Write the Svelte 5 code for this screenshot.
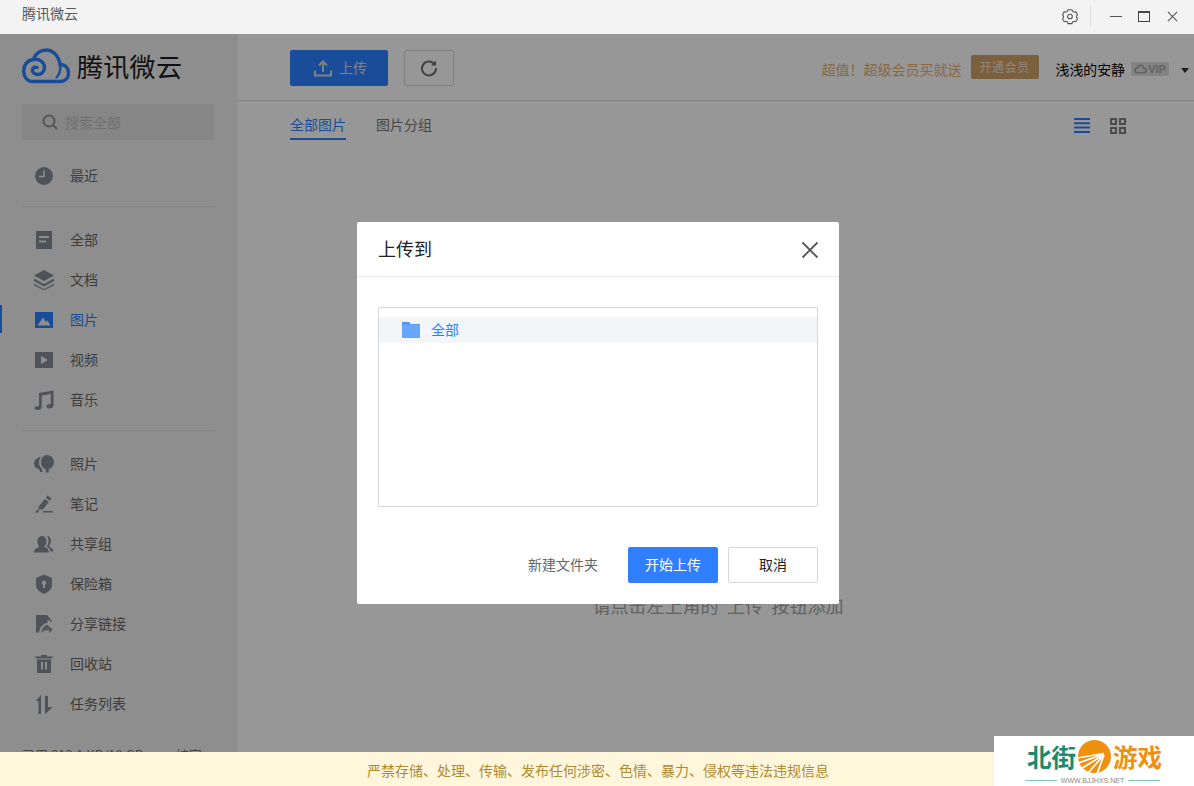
<script>
    const group1 = [{ icon: "doc", label: "全部" }, { icon: "layers", label: "文档" }, { icon: "image", label: "图片", active: true }, { icon: "video", label: "视频" }, { icon: "music", label: "音乐" }];
    const group2 = [{ icon: "balloon", label: "照片" }, { icon: "pen", label: "笔记" }, { icon: "users", label: "共享组" }, { icon: "shield", label: "保险箱" }, { icon: "share", label: "分享链接" }, { icon: "trash", label: "回收站" }, { icon: "sort", label: "任务列表" }];

    const icons = {
        clock: `<circle cx="10" cy="10" r="9"/><path d="M10 4.500v6H5" fill="none" stroke="#eee" stroke-width="1.600"/>`,
        doc: `<path fill-rule="evenodd" d="M2 1h16v18H2zM5 6v2h10V6zM5 10.500v2h7v-2z"/>`,
        layers: `<path d="M10 0 20 5.500 10 11 0 5.500z"/><path d="M0 8.500 10 14 20 8.500V11L10 16.500 0 11z"/><path d="M0 13.500 10 19 20 13.500V15.500L10 20.500 0 15.500z" opacity=".85"/>`,
        image: `<path fill="currentColor" fill-rule="evenodd" d="M1 2h18v16H1zM3.500 15.500h13L13.500 10.500 12 12 9 7.500z"/>`,
        video: `<path fill-rule="evenodd" d="M1 2h18v16H1zM7 6v8l7-4z"/>`,
        music: `<path d="M5 3 19.500 0.500V15.500C19.500 17.500 17.500 18.500 15.500 18.500S12.500 17.500 12.500 16.200 14 14 16.800 14V4L7.700 5.500V17.500C7.700 19 6 20 3.500 20S0.500 19.200 0.500 18 2 16 5 16z"/>`,
        balloon: `<path d="M13 1C17 1 20 4 20 8 20 11.500 17.500 14.500 14.500 15.500L15 18.500H11.500L12 15.500C9 14.500 7 11.500 7 8 7 4 9.500 1 13 1z"/><path d="M5.500 3C3 4 0 6.500 0 9.500 0 12.500 3 15 5.500 15.500L6 18H8.500L8 15C6 13 5 11 5 8.500 5 6.500 5.500 4.500 6.800 3z"/>`,
        pen: `<path d="M13.500 1.500 17.500 4.500 15.800 6.800 11.800 3.800z"/><path d="M10.800 5 14.800 8 9 15.500H4.500L4.800 12.500z"/><path d="M8 18.500H19V17H9.500zM1 18.500 3.500 15.500H5L4.500 18.500z"/>`,
        users: `<path d="M8 2C11 2 12.500 4.500 12.500 7.500 12.500 9.500 11.500 11 10.500 12V13C13 14 15 15.500 15 18.500H0C0 15.500 2.500 14 5 13V12C4 11 3.500 9.500 3.500 7.500 3.500 4.500 5 2 8 2z"/><path d="M13 2C15.500 2 17 4 17 7 17 9 16 10.500 15 11.500V12.500C17 13.500 19 14.500 19.500 17L17 18C16.500 15 14.500 13.500 12.500 12.500 13.500 11 14.500 9.500 14.500 7 14.500 5 14 3.500 13 2z"/>`,
        shield: `<path fill-rule="evenodd" d="M10 0.500 18 4V11C18 15 14 18.500 10 20 6 18.500 2 15 2 11V4zM10 6.500A2.300 2.300 0 0 0 9 10.800V14H11V10.800A2.300 2.300 0 0 0 10 6.500z"/>`,
        share: `<path d="M2 1H13L18 7V8.500L13.500 5.500V9C9 9.500 6 12.500 5 18.500H2z"/><path d="M13.500 8V11L19 15.500 15 19V16.500C12 16 9.500 16.500 7 19 8 14 10 11.500 13.500 10.500z" opacity=".9"/>`,
        trash: `<path d="M7 1H13V2.500H18.500V4.500H1.500V2.500H7z"/><path fill-rule="evenodd" d="M3 5.500H17V19H3zM7 8V15.500H9V8zM11 8V15.500H13V8z"/>`,
        sort: `<path d="M7 1V18H5V7H1.500zM11 2H14V13H18.500L12 19.500H11z"/><path d="M5 5 7 3V20H4.500V6z"/>`
    };
</script>

<div class="window">
    <header class="titlebar">
        <span class="app-name">腾讯微云</span>
        <div class="win-controls">
            <svg class="gear" width="16" height="17" viewBox="0 0 18 18" fill="none" stroke="#555" stroke-width="1.200">
                <path d="M6.800 1.500h4.400l.7 1.800 1.800.8 1.800-.5 2 3.400-1.200 1.500 0 1-.0 .5 1.200 1.500-2 3.400-1.800-.5-1.800.8-.7 1.800H6.800l-.7-1.800-1.800-.8-1.800.5-2-3.400 1.200-1.500v-1.500L.5 7l2-3.400 1.800.5 1.800-.8z"/>
                <circle cx="9" cy="9" r="2.600"/>
            </svg>
            <i class="win-sep"></i>
            <i class="win-min"></i>
            <i class="win-max"></i>
            <svg width="11" height="11" viewBox="0 0 12 12" stroke="#555" stroke-width="1.200"><path d="M1 1l10 10M11 1L1 11"/></svg>
        </div>
    </header>

    <div class="app">
        <aside class="sidebar">
            <div class="logo">
                <svg width="48" height="36" viewBox="0 0 48 36" fill="none" stroke="#2b80ff" stroke-width="3.400" stroke-linecap="round">
                    <path d="M10 33.500H38C44 33.500 46.500 29 46.500 25 46.500 20 43 16 38 16.500 37 8 31 2 24.500 2 18 2 13 6 11.500 11.500 5.500 12 1.700 17 1.700 23 1.700 29 5.500 33.500 10 33.500z"/>
                    <path d="M11.500 11.500C17 10.500 22.500 14 22.500 19.500 22.500 24 19 26.500 15.500 26.500 12 26.500 10 24 10.500 21.500 11 19.500 13 18.500 15 19.500"/>
                    <path d="M38 16.500C39 22 37 27 34.500 29.500" stroke-width="2.400"/>
                </svg>
                <span class="logo-text">腾讯微云</span>
            </div>
            <div class="search">
                <svg width="16" height="16" viewBox="0 0 16 16" fill="none" stroke="#8f8f8f" stroke-width="2"><circle cx="7" cy="7" r="5.500"/><path d="M11 11l4 4"/></svg>
                <span>搜索全部</span>
            </div>
            <nav class="nav">
                <div class="nav-item">
                    <svg class="nav-icon" width="20" height="20" viewBox="0 0 20 20">{@html icons.clock}</svg>
                    <span>最近</span>
                </div>
                <div class="divider"></div>
                {#each group1 as item}
                    <div class="nav-item" class:active={item.active}>
                        <svg class="nav-icon" width="20" height="20" viewBox="0 0 20 20">{@html icons[item.icon]}</svg>
                        <span>{item.label}</span>
                    </div>
                {/each}
                <div class="divider"></div>
                {#each group2 as item}
                    <div class="nav-item">
                        <svg class="nav-icon" width="20" height="20" viewBox="0 0 20 20">{@html icons[item.icon]}</svg>
                        <span>{item.label}</span>
                    </div>
                {/each}
            </nav>
            <div class="usage">
                <span>已用 313.1 KB/10 GB</span>
                <span>扩容 &gt;</span>
            </div>
        </aside>

        <main class="main">
            <div class="toolbar">
                <button class="upload">
                    <svg width="18" height="18" viewBox="0 0 18 18" fill="none" stroke="#d8d8d8" stroke-width="2"><path d="M9 13V3M5 6.500L9 2.500 13 6.500" /><path d="M1 11.500V16.500H17V11.500"/></svg>
                    <span>上传</span>
                </button>
                <button class="refresh">
                    <svg width="18" height="18" viewBox="0 0 18 18" fill="none" stroke="#6d6d6d" stroke-width="2"><path d="M14.800 5.500A7 7 0 1 0 16 9"/><path d="M16 1.500V6.500H11" fill="#6d6d6d" stroke="none"/></svg>
                </button>
                <div class="account">
                    <span class="promo">超值！超级会员买就送</span>
                    <span class="open-vip">开通会员</span>
                    <span class="username">浅浅的安静</span>
                    <span class="vip">
                        <svg width="13" height="10" viewBox="0 0 14 10" fill="none" stroke="#a4a4a4" stroke-width="1.800"><path d="M3.500 9H10.500C12 9 13 8 13 6.500 13 5 12 4.200 10.800 4.200 10.300 2 9 1 7.200 1 5.500 1 4 2 3.600 3.800 2 4 1 5 1 6.500 1 8 2 9 3.500 9z"/></svg>
                        VIP
                    </span>
                    <i class="caret"></i>
                </div>
            </div>
            <div class="tabs">
                <span class="tab selected">全部图片</span>
                <span class="tab">图片分组</span>
                <div class="views">
                    <svg width="16" height="15" viewBox="0 0 16 15" fill="#2b80ff"><path d="M0 0h16v2H0zM0 4.300h16v2H0zM0 8.600h16v2H0zM0 13h16v2H0z"/></svg>
                    <svg width="16" height="16" viewBox="0 0 16 16" fill="none" stroke="#7d7d7d" stroke-width="2"><path d="M1 1h5v5H1zM10 1h5v5h-5zM1 10h5v5H1zM10 10h5v5h-5z"/></svg>
                </div>
            </div>
            <p class="empty">请点击左上角的"上传"按钮添加</p>
        </main>

        <div class="overlay">
            <section class="modal">
                <div class="modal-head">
                    <h2>上传到</h2>
                    <svg class="modal-close" width="18" height="18" viewBox="0 0 18 18" stroke="#555" stroke-width="1.800"><path d="M1.500 1.500l15 15M16.500 1.500l-15 15"/></svg>
                </div>
                <div class="modal-body">
                    <div class="tree">
                        <div class="tree-row">
                            <svg width="18" height="16" viewBox="0 0 18 16"><path fill="#4f94f0" d="M0 0h7l2 2h9v3H0z"/><path fill="#66a6ff" d="M0 2.500h18V16H0z"/></svg>
                            <span>全部</span>
                        </div>
                    </div>
                </div>
                <div class="modal-foot">
                    <span class="new-folder">新建文件夹</span>
                    <button class="primary">开始上传</button>
                    <button class="cancel">取消</button>
                </div>
            </section>
        </div>

        <div class="banner">严禁存储、处理、传输、发布任何涉密、色情、暴力、侵权等违法违规信息</div>

        <div class="watermark">
            <div class="mark-row">
                <span class="green">北街</span>
                <svg width="35" height="34" viewBox="0 0 35 34">
                    <circle cx="17.500" cy="16.500" r="16.500" fill="#f0900f"/>
                    <path d="M27 13.500 0 18M27 14 0 23.500M27 14.500 3 29.500M27 15 10 34M27 15 20 34" stroke="#fff" stroke-width="1.700"/>
                </svg>
                <span class="orange">游戏</span>
            </div>
            <div class="mark-url"><i></i><span>WWW.BJJHXS.NET</span><i></i></div>
        </div>
    </div>
</div>

<style>
    :global(body) {
        margin: 0;
        font-family: "Noto Sans CJK SC", "Liberation Sans", sans-serif;
    }
    .window {
        width: 1194px;
        height: 786px;
        display: flex;
        flex-direction: column;
        overflow: hidden;
        font-size: 14px;
    }
    i {
        display: block;
    }
    .titlebar {
        height: 34px;
        flex: none;
        background: #f3f3f3;
        display: flex;
        align-items: center;
        justify-content: space-between;
        padding: 0 16px 6px 22px;
        box-sizing: border-box;
    }
    .app-name {
        color: #555;
        margin-bottom: 2px;
    }
    .win-controls {
        display: flex;
        align-items: center;
        padding-top: 4px;
    }
    .win-sep {
        width: 1px;
        height: 20px;
        background: #dcdcdc;
        margin: 0 19px 0 12px;
    }
    .win-min {
        width: 12px;
        height: 1px;
        background: #555;
        margin-right: 16px;
    }
    .win-max {
        width: 10px;
        height: 8px;
        border: 1px solid #444;
        border-top-width: 2px;
        margin-right: 17px;
    }
    .app {
        flex: 1;
        display: flex;
        position: relative;
        min-height: 0;
    }
    .sidebar {
        width: 238px;
        flex: none;
        background: #ededed;
        display: flex;
        flex-direction: column;
    }
    .logo {
        display: flex;
        align-items: center;
        gap: 7px;
        padding: 14px 0 0 22px;
    }
    .logo-text {
        font-size: 26px;
        line-height: 36px;
        letter-spacing: 0.3px;
        color: #1c1c1c;
    }
    .search {
        margin: 20px 24px 0 22px;
        height: 36px;
        background: #dfdfdf;
        border-radius: 2px;
        display: flex;
        align-items: center;
        gap: 7px;
        padding-left: 20px;
        color: #bcbcbc;
    }
    .nav {
        margin-top: 16px;
    }
    .nav-item {
        height: 40px;
        display: flex;
        align-items: center;
        gap: 16px;
        padding-left: 34px;
        color: #666;
        position: relative;
    }
    .nav-item span {
        margin-bottom: 2px;
    }
    .nav-item.active {
        color: #2b80ff;
    }
    .nav-item.active::before {
        content: "";
        position: absolute;
        left: 0;
        top: 5px;
        width: 2px;
        height: 28px;
        background: #2b80ff;
    }
    .nav-icon {
        fill: #808a93;
        color: #808a93;
        flex: none;
    }
    .active .nav-icon {
        color: #2b80ff;
    }
    .divider {
        height: 1px;
        background: #dedede;
        margin: 10px 24px 13px 22px;
    }
    .usage {
        margin-top: 21px;
        display: flex;
        justify-content: space-between;
        padding: 0 26px 0 22px;
        font-size: 13px;
        line-height: 20px;
        color: #777;
    }
    .main {
        flex: 1;
        background: #fcfcfc;
        display: flex;
        flex-direction: column;
        min-width: 0;
    }
    .toolbar {
        height: 67px;
        flex: none;
        box-sizing: border-box;
        border-bottom: 1px solid #d8d8d8;
        display: flex;
        align-items: center;
        padding: 2px 5px 0 52px;
    }
    button {
        font: inherit;
        box-sizing: border-box;
        padding: 0;
    }
    .upload {
        width: 98px;
        height: 36px;
        border: 0;
        border-radius: 2px;
        background: #2b80ff;
        color: #d8d8d8;
        display: flex;
        align-items: center;
        justify-content: center;
        gap: 7px;
        padding-left: 3px;
    }
    .upload span {
        margin-bottom: 2px;
    }
    .refresh {
        width: 50px;
        height: 36px;
        margin-left: 16px;
        background: transparent;
        border: 1px solid #d4d4d4;
        border-radius: 2px;
        display: flex;
        align-items: center;
        justify-content: center;
    }
    .account {
        margin-left: auto;
        display: flex;
        align-items: center;
        padding-top: 2px;
    }
    .promo {
        color: #e3ad75;
    }
    .open-vip {
        margin: 0 0 4px 9px;
        width: 68px;
        height: 24px;
        border-radius: 2px;
        background: #cf9e66;
        color: #f0e0c8;
        font-size: 12px;
        letter-spacing: 0.5px;
        line-height: 24px;
        text-align: center;
    }
    .username {
        margin-left: 17px;
        font-size: 13.900px;
        color: #000;
    }
    .vip {
        margin-left: 6px;
        width: 38px;
        height: 14px;
        background: #dcdcdc;
        border-radius: 2px;
        display: flex;
        align-items: center;
        justify-content: center;
        gap: 1px;
        font: bold 11px "Liberation Sans", sans-serif;
        color: #a4a4a4;
    }
    .caret {
        width: 0;
        height: 0;
        margin: 2px 0 0 12px;
        border: 4px solid transparent;
        border-top: 5px solid #333;
        border-bottom: 0;
    }
    .tabs {
        display: flex;
        align-items: flex-start;
        gap: 30px;
        height: 48px;
        flex: none;
        padding: 13px 68px 0 52px;
        box-sizing: border-box;
    }
    .tab {
        color: #777;
        height: 24px;
        line-height: 20px;
    }
    .tab.selected {
        color: #2b80ff;
        border-bottom: 2px solid #2b80ff;
    }
    .views {
        margin-left: auto;
        display: flex;
        gap: 20px;
        padding-top: 4px;
    }
    .empty {
        margin: 444px 0 0;
        padding-left: 4px;
        text-align: center;
        font-size: 18px;
        line-height: 24px;
        color: #a3a3a3;
    }
    .overlay {
        position: absolute;
        inset: 0;
        background: rgba(0, 0, 0, 0.4);
        display: flex;
        justify-content: center;
        align-items: flex-start;
        padding: 188px 0 0 2px;
        box-sizing: border-box;
    }
    .modal {
        width: 482px;
        height: 382px;
        background: #fff;
        border-radius: 2px;
        display: flex;
        flex-direction: column;
    }
    .modal-head {
        height: 55px;
        flex: none;
        box-sizing: border-box;
        border-bottom: 1px solid #e8eaec;
        display: flex;
        align-items: center;
        justify-content: space-between;
        padding: 0 20px 0 21px;
    }
    h2 {
        margin: 0 0 2px;
        font-size: 18px;
        font-weight: 400;
        color: #222;
    }
    .modal-close {
        margin-top: 2px;
    }
    .modal-body {
        padding: 30px 21px 0;
    }
    .tree {
        height: 200px;
        box-sizing: border-box;
        border: 1px solid #d4d9dc;
        border-radius: 1px;
        padding-top: 9px;
    }
    .tree-row {
        height: 26px;
        background: #f3f6f9;
        display: flex;
        align-items: center;
        gap: 11px;
        padding-left: 23px;
        color: #2f7fff;
    }
    .tree-row span {
        margin-bottom: 2px;
    }
    .modal-foot {
        margin-top: 40px;
        padding-right: 21px;
        display: flex;
        align-items: center;
        justify-content: flex-end;
    }
    .new-folder {
        color: #666;
        margin: 0 30px 2px 0;
    }
    .modal-foot button {
        width: 90px;
        height: 36px;
        border-radius: 2px;
        padding-bottom: 2px;
    }
    .primary {
        background: #2f7fff;
        color: #fff;
        border: 0;
    }
    .cancel {
        margin-left: 10px;
        background: #fff;
        color: #222;
        border: 1px solid #d4d9dc;
    }
    .banner {
        position: absolute;
        left: 0;
        right: 0;
        bottom: 0;
        height: 34px;
        background: #fff6dc;
        color: #b08a2c;
        line-height: 37px;
        text-align: center;
        padding-left: 2px;
    }
    .watermark {
        position: absolute;
        right: 0;
        bottom: 0;
        width: 200px;
        height: 50px;
        background: #fff;
        display: flex;
        flex-direction: column;
        align-items: center;
    }
    .mark-row {
        display: flex;
        align-items: center;
        gap: 1px;
        height: 41px;
        padding-left: 1px;
    }
    .mark-row span {
        font-size: 24.500px;
        font-weight: 700;
        line-height: 30px;
    }
    .green {
        color: #1a8a6c;
    }
    .orange {
        color: #f0900f;
    }
    .mark-url {
        display: flex;
        align-items: center;
        gap: 4px;
        font: 7px "Liberation Sans", sans-serif;
        color: #888;
        padding-right: 3px;
    }
    .mark-url i {
        width: 32px;
        height: 1px;
        background: #7fcab4;
    }
</style>
